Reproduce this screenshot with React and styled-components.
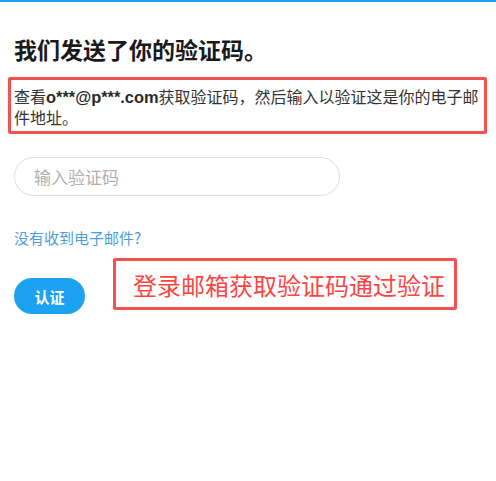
import React from 'react';
import styled, { createGlobalStyle } from 'styled-components';

const GlobalStyle = createGlobalStyle`
  html, body {
    margin: 0;
    padding: 0;
    background: #fff;
  }
  body {
    font-family: "Noto Sans CJK SC", "Noto Sans", sans-serif;
    color: #1f1f1f;
  }
`;

const TopBar = styled.div`
  height: 2px;
  background: #1da1f2;
`;

const Page = styled.div`
  padding: 0 9px 0 14px;
`;

const Title = styled.h1`
  margin: 31px 0 0;
  font-size: 23px;
  line-height: 32px;
  font-weight: 700;
  color: #1a1a1a;
`;

const MarkedBox = styled.div`
  border: 3px solid #f4524f;
  border-radius: 2px;
`;

const Notice = styled(MarkedBox)`
  margin: 12px 0 0 -6px;
  padding: 6px 1px 4px 3px;
  font-size: 16px;
  line-height: 20px;
  color: #333;
`;

const Email = styled.span`
  font-family: "Liberation Sans", "Noto Sans CJK SC", sans-serif;
  font-size: 16.4px;
  font-weight: 700;
  color: #2a2a2a;
`;

const CodeInput = styled.input`
  display: block;
  box-sizing: border-box;
  width: 326px;
  height: 39px;
  margin-top: 23px;
  padding: 0 19px;
  border: 1px solid #dcdcdc;
  border-radius: 20px;
  font-family: inherit;
  font-size: 17px;
  color: #333;
  outline: none;

  &::placeholder {
    color: #b0b0b0;
  }
`;

const ResendLink = styled.a`
  display: block;
  margin-top: 32px;
  font-size: 15px;
  line-height: 20px;
  color: #4aa0dc;
  text-decoration: none;
`;

const ActionRow = styled.div`
  display: flex;
  align-items: flex-start;
  margin-top: 10px;
`;

const VerifyButton = styled.button`
  width: 71px;
  height: 36px;
  margin-top: 20px;
  border: none;
  border-radius: 18px;
  background: #1da1f2;
  color: #fff;
  font-family: inherit;
  font-size: 15px;
  font-weight: 700;
  cursor: pointer;
`;

const Hint = styled(MarkedBox)`
  box-sizing: border-box;
  width: 344px;
  height: 52px;
  margin-left: 28px;
  padding-left: 17px;
  display: flex;
  align-items: center;
  font-size: 24px;
  color: #ff4444;
`;

export default function App() {
  return (
    <>
      <GlobalStyle />
      <TopBar />
      <Page>
        <Title>我们发送了你的验证码。</Title>
        <Notice>
          查看<Email>o***@p***.com</Email>获取验证码，然后输入以验证这是你的电子邮件地址。
        </Notice>
        <CodeInput placeholder="输入验证码" />
        <ResendLink href="#">没有收到电子邮件?</ResendLink>
        <ActionRow>
          <VerifyButton>认证</VerifyButton>
          <Hint>登录邮箱获取验证码通过验证</Hint>
        </ActionRow>
      </Page>
    </>
  );
}
